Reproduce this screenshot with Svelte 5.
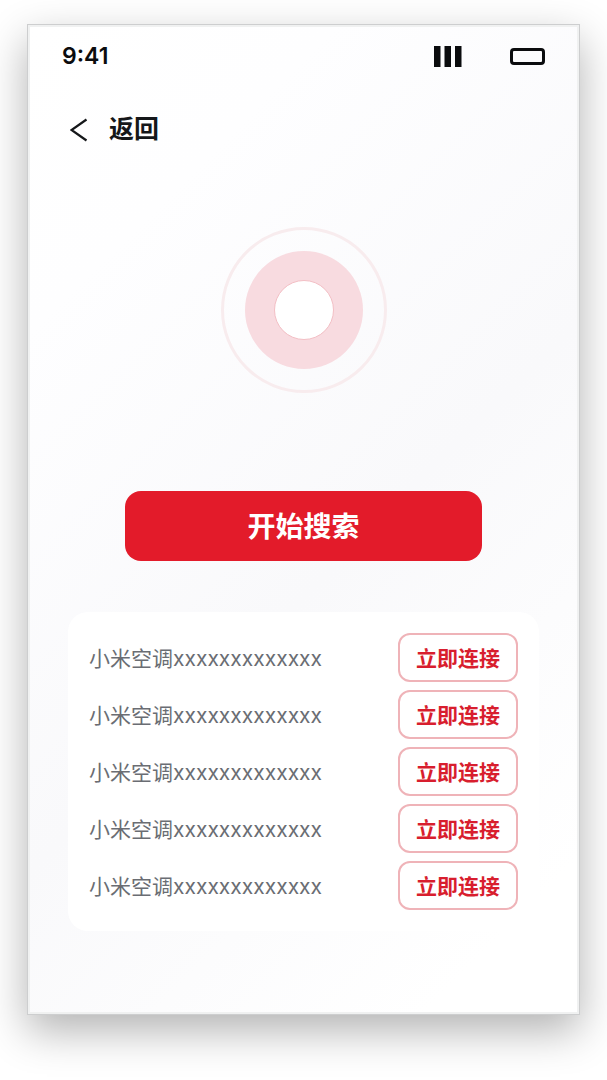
<script>
  let searching = $state(false);
  let connectedId = $state(null);

  const devices = [
    { id: 1, name: '小米空调xxxxxxxxxxxxx' },
    { id: 2, name: '小米空调xxxxxxxxxxxxx' },
    { id: 3, name: '小米空调xxxxxxxxxxxxx' },
    { id: 4, name: '小米空调xxxxxxxxxxxxx' },
    { id: 5, name: '小米空调xxxxxxxxxxxxx' },
  ];
</script>

<div class="phone">
  <div class="status-bar">
    <span class="time">9:41</span>
    <div class="status-icons">
      <svg width="28" height="21" viewBox="0 0 28 21" aria-hidden="true">
        <path d="M0 0h6.500v21H0zM10.500 0H17v21h-6.500zM21 0h6.500v21H21z" fill="#0b0c0e" />
      </svg>
      <svg width="36" height="17" viewBox="0 0 36 17" aria-hidden="true">
        <rect x="1.500" y="1.500" width="32" height="14" rx="2.500" fill="none" stroke="#0b0c0e" stroke-width="3" />
      </svg>
    </div>
  </div>

  <header>
    <button class="back" type="button" onclick={() => history.back()}>
      <svg width="18" height="24" viewBox="0 0 18 24" aria-hidden="true">
        <path d="M16.500 1.500L1.500 12L16.500 22.500" fill="none" stroke="#15171a" stroke-width="2.200" />
      </svg>
      <span>返回</span>
    </button>
  </header>

  <main>
    <div class="radar" class:searching>
      <div class="ring">
        <div class="core"></div>
      </div>
    </div>

    <button class="search" type="button" onclick={() => (searching = !searching)}>开始搜索</button>

    <ul class="devices">
      {#each devices as device (device.id)}
        <li>
          <span class="name">{device.name}</span>
          <button
            class="connect"
            type="button"
            aria-pressed={connectedId === device.id}
            onclick={() => (connectedId = device.id)}
          >
            立即连接
          </button>
        </li>
      {/each}
    </ul>
  </main>
</div>

<style>
  :global(body) {
    background: #fff;
  }

  .phone {
    box-sizing: border-box;
    margin: 24px 27px 64px;
    padding-bottom: 83px;
    border: 1px solid #cdcecf;
    box-shadow: inset 0 0 0 2px #f0f1f1, 0 16px 40px rgba(0, 0, 0, 0.3);
    background: linear-gradient(135deg, #fff 0%, #fefeff 20%, #f9f9fb 55%, #fff 90%);
    color: #15171a;
    font-family: Inter, 'Noto Sans CJK SC', sans-serif;
  }

  button {
    font-family: inherit;
    cursor: pointer;
  }

  .status-bar {
    display: flex;
    align-items: center;
    justify-content: space-between;
    height: 62px;
    padding: 0 33px 0 34px;
  }

  .time {
    color: #0b0c0e;
    font-size: 23px;
    font-weight: 600;
  }

  .status-icons {
    display: flex;
    align-items: center;
    gap: 48px;
  }

  header {
    display: flex;
    padding: 25px 42px 0;
  }

  .back {
    display: flex;
    align-items: center;
    gap: 21px;
    height: 36px;
    padding: 0;
    border: none;
    background: none;
    color: inherit;
    font-size: 25px;
    font-weight: 700;
    line-height: 36px;
  }

  .back span {
    padding-bottom: 2px;
  }

  main {
    display: flex;
    flex-direction: column;
    align-items: center;
    padding: 79px 40px 0;
  }

  .radar,
  .ring {
    display: flex;
    align-items: center;
    justify-content: center;
    box-sizing: border-box;
    border-radius: 50%;
  }

  .radar {
    width: 166px;
    height: 166px;
    border: 3px solid #f8ecee;
  }

  .ring {
    width: 118px;
    height: 118px;
    background: #f8dbe0;
  }

  .core {
    box-sizing: border-box;
    width: 60px;
    height: 60px;
    border: 1px solid #f3bfc5;
    border-radius: 50%;
    background: #fff;
  }

  .searching .ring {
    animation: pulse 1.2s ease-in-out infinite alternate;
  }

  .search {
    width: 76%;
    height: 70px;
    margin-top: 98px;
    padding: 0 0 2px;
    border: none;
    border-radius: 16px;
    background: #e31b2a;
    color: #fff;
    font-size: 28px;
    font-weight: 700;
  }

  .devices {
    display: flex;
    flex-direction: column;
    gap: 8px;
    box-sizing: border-box;
    width: 100%;
    margin: 51px 0 0;
    padding: 21px;
    border-radius: 20px;
    background: #fff;
    list-style: none;
  }

  li {
    display: flex;
    align-items: center;
    justify-content: space-between;
  }

  .name {
    padding-bottom: 2px;
    color: #6a6d73;
    font-size: 21px;
  }

  .connect {
    width: 120px;
    height: 49px;
    padding: 0 0 2px;
    border: 2px solid #efb3b8;
    border-radius: 12px;
    background: #fff;
    color: #d81e2e;
    font-size: 21px;
    font-weight: 700;
  }

  @keyframes pulse {
    to {
      transform: scale(1.15);
    }
  }
</style>
